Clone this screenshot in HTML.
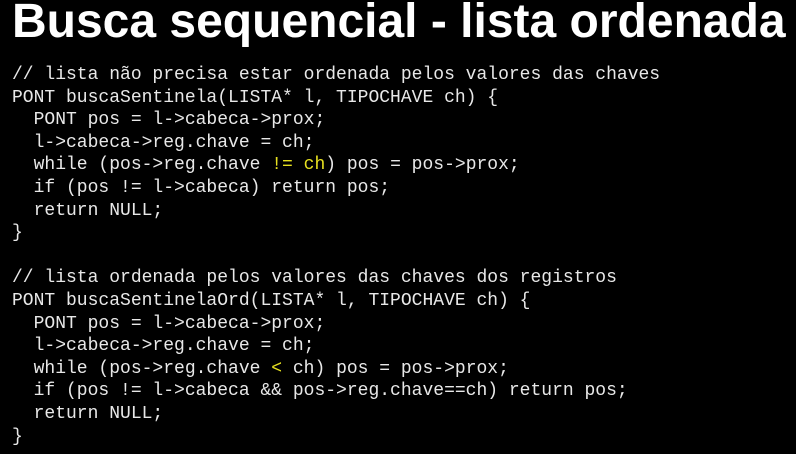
<!DOCTYPE html>
<html><head><meta charset="utf-8"><style>
html,body{margin:0;padding:0;background:#000;width:796px;height:454px;overflow:hidden}
h1{position:absolute;left:12px;top:-2px;margin:0;font:bold 48px/48px "Liberation Sans",sans-serif;color:#fff;white-space:nowrap;letter-spacing:0px}
pre{position:absolute;left:12px;top:64px;margin:0;font:18px/22.6px "Liberation Mono",monospace;color:#e8e8e8}
.y{color:#e6e020}
</style></head><body>
<h1>Busca sequencial - lista ordenada</h1>
<pre>// lista não precisa estar ordenada pelos valores das chaves
PONT buscaSentinela(LISTA* l, TIPOCHAVE ch) {
  PONT pos = l->cabeca->prox;
  l->cabeca->reg.chave = ch;
  while (pos->reg.chave <span class="y">!= ch</span>) pos = pos->prox;
  if (pos != l->cabeca) return pos;
  return NULL;
}

// lista ordenada pelos valores das chaves dos registros
PONT buscaSentinelaOrd(LISTA* l, TIPOCHAVE ch) {
  PONT pos = l->cabeca->prox;
  l->cabeca->reg.chave = ch;
  while (pos->reg.chave <span class="y">&lt;</span> ch) pos = pos->prox;
  if (pos != l->cabeca &amp;&amp; pos->reg.chave==ch) return pos;
  return NULL;
}</pre>
</body></html>
